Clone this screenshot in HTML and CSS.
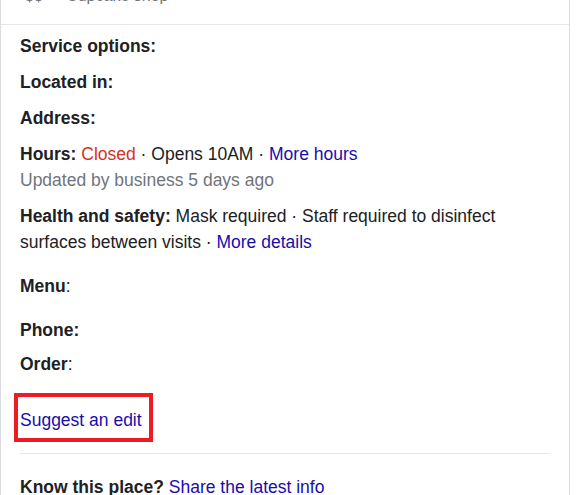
FILE: index.html
```html
<!DOCTYPE html>
<html lang="en">
  <head>
    <meta charset="UTF-8" />
    <meta name="viewport" content="width=device-width, initial-scale=1.0" />
    <title>Place details</title>
    <link rel="stylesheet" href="styles.css">
  </head>
  <body>
    <div class="card">
      <!-- Title strip, scrolled mostly out of view -->
      <div class="card-head">
        <div class="head-line">
          <span>$$</span>
          <span>·</span>
          <span>Cupcake shop</span>
        </div>
      </div>

      <div class="card-body">
        <div class="row"><span class="label">Service options:</span></div>
        <div class="row"><span class="label">Located in:</span></div>
        <div class="row"><span class="label">Address:</span></div>

        <div class="row">
          <span class="label">Hours:</span>
          <span class="closed">Closed</span> · Opens 10AM ·
          <a href="#" class="link">More hours</a>
          <div class="muted">Updated by business 5 days ago</div>
        </div>

        <div class="row row-wide">
          <span class="label">Health and safety:</span>
          Mask required · Staff required to disinfect surfaces between visits ·
          <a href="#" class="link">More details</a>
        </div>

        <div class="row row-wide"><span class="label">Menu</span>:</div>
        <div class="row row-tight"><span class="label">Phone:</span> <span class="faint">·</span></div>
        <div class="row"><span class="label">Order</span>:</div>

        <div class="edit-box">
          <a href="#" class="link">Suggest an edit</a>
        </div>

        <hr class="divider" />

        <div class="row">
          <span class="label">Know this place?</span>
          <a href="#" class="link">Share the latest info</a>
        </div>
      </div>
    </div>
  </body>
</html>
```

FILE: styles.css
```css
body {
  margin: 0;
  font-family: "Liberation Sans", Arial, sans-serif;
  font-size: 17.5px;
  line-height: 26px;
  color: #202124;
  background-color: #fff;
}

/* Card with thin side borders */
.card {
  width: 568px;
  border-left: 1px solid #dadce0;
  border-right: 1px solid #dadce0;
  min-height: 495px;
}

.card-head {
  height: 24px;
  overflow: hidden;
  border-bottom: 1px solid #e6e6e6;
}

.head-line {
  display: flex;
  gap: 9px;
  margin-top: -14px;
  padding-left: 24px;
  font-size: 16px;
  line-height: 20px;
  color: #70757a;
}

.card-body {
  padding: 8px 19px 0 19px;
}

.row {
  margin-bottom: 10px;
}

.row-wide {
  margin-bottom: 18px;
}

.row-tight {
  margin-bottom: 8px;
}

.label {
  font-weight: bold;
}

.closed {
  color: #d93025;
}

.muted {
  color: #70757a;
}

.faint {
  color: #f0d8e0;
  font-size: 8px;
  line-height: 0;
}

.link {
  color: #1a0dab;
  text-decoration: none;
}

/* Red highlight drawn round the edit link */
.edit-box {
  display: inline-block;
  margin: 6px 0 0 -6px;
  padding: 10px 7px 5px 2px;
  border: 4px solid #ed1c24;
}

.divider {
  border: none;
  border-top: 1px solid #e6e6e6;
  margin: 11px 0 20px 0;
}
```
